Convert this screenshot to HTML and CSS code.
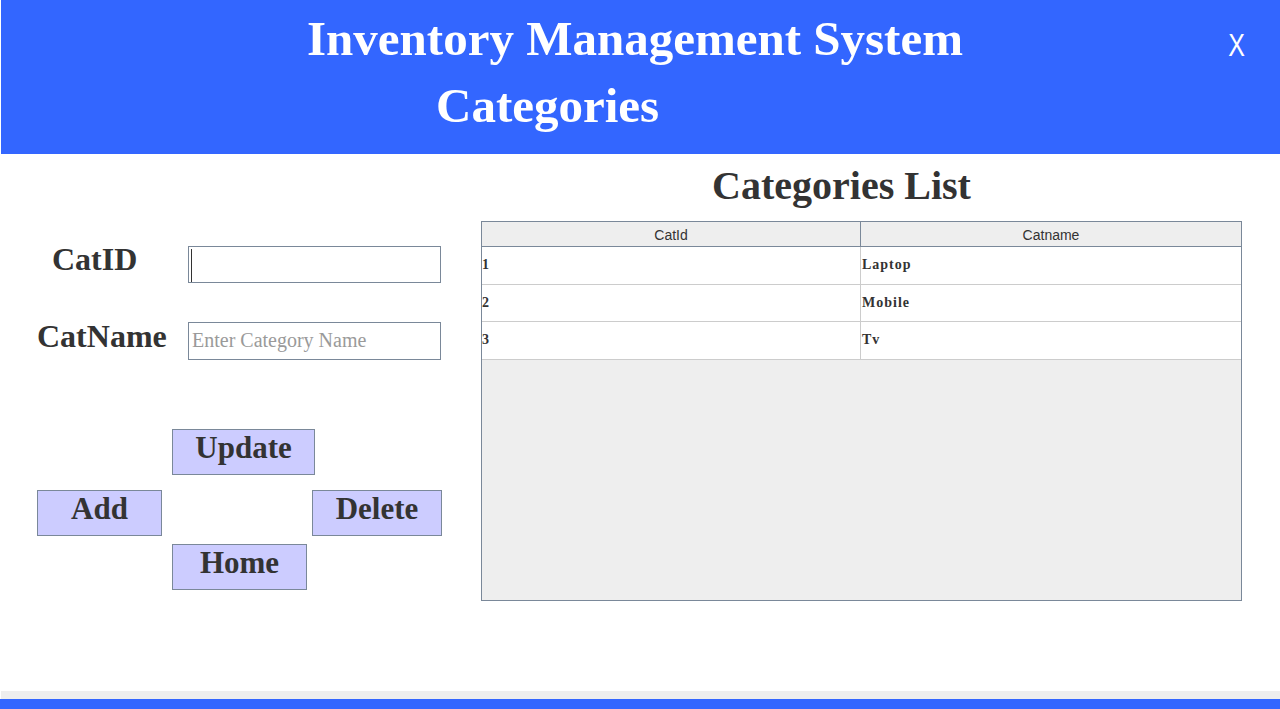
FILE: index.html
```html
<!DOCTYPE html>
<html lang="en">
<head>
<meta charset="utf-8">
<title>Inventory Management System - Categories</title>
<link rel="stylesheet" href="styles.css">
</head>
<body>
<div class="app">
  <header class="topbar">
    <div class="titles">
      <h1 class="title-main">Inventory Management System</h1>
      <h2 class="title-sub">Categories</h2>
    </div>
    <div class="close">X</div>
  </header>
  <main class="content">
    <section class="form-panel">
      <div class="field-row">
        <label class="field-label label-id">CatID</label>
        <div class="field field-id"><span class="caret"></span></div>
      </div>
      <div class="field-row row-name">
        <label class="field-label">CatName</label>
        <div class="field field-name"><span class="placeholder">Enter Category Name</span></div>
      </div>
      <div class="actions">
        <button class="btn btn-update">Update</button>
        <button class="btn btn-add">Add</button>
        <button class="btn btn-delete">Delete</button>
        <button class="btn btn-home">Home</button>
      </div>
    </section>
    <section class="list-panel">
      <h2 class="list-title">Categories List</h2>
      <div class="grid-table">
        <div class="thead">
          <div class="th th-first">CatId</div>
          <div class="th">Catname</div>
        </div>
        <div class="tr">
          <div class="td td-first">1</div>
          <div class="td">Laptop</div>
        </div>
        <div class="tr">
          <div class="td td-first">2</div>
          <div class="td">Mobile</div>
        </div>
        <div class="tr">
          <div class="td td-first">3</div>
          <div class="td">Tv</div>
        </div>
      </div>
    </section>
  </main>
  <footer class="footer">
    <div class="footer-gray"></div>
    <div class="footer-blue"></div>
  </footer>
</div>
</body>
</html>
```
FILE: styles.css
```css
* { box-sizing: border-box; }
html, body { margin: 0; padding: 0; background: #ffffff; }
body {
  width: 1280px;
  height: 709px;
  overflow: hidden;
  font-family: "Liberation Serif", "Times New Roman", serif;
  color: #333333;
}
.app { display: flex; flex-direction: column; width: 1280px; height: 709px; }

/* Header */
.topbar {
  height: 154px;
  margin-left: 1px;
  background: #3366ff;
  display: flex;
  align-items: flex-start;
  color: #ffffff;
}
.titles { flex: 1; display: flex; flex-direction: column; }
.title-main, .title-sub {
  margin: 0;
  font-size: 49px;
  font-weight: bold;
  line-height: 67px;
  white-space: nowrap;
}
.title-main { padding-top: 5px; padding-left: 306px; }
.title-sub { padding-left: 435px; }
.close {
  font-family: "Liberation Sans", Arial, sans-serif;
  font-size: 32px;
  line-height: 32px;
  padding-top: 29px;
  margin-right: 33px;
  transform: scaleX(0.78);
}

/* Main */
.content { height: 537px; display: flex; }
.form-panel { width: 481px; padding-top: 92px; display: flex; flex-direction: column; }
.field-row { display: flex; align-items: flex-start; padding-left: 37px; height: 37px; }
.row-name { margin-top: 39px; height: 38px; }
.field-label {
  width: 151px;
  font-size: 32px;
  font-weight: bold;
  line-height: 27px;
  color: #333333;
  white-space: nowrap;
}
.row-name .field-label { line-height: 29px; }
.label-id { padding-left: 15px; }
.field {
  width: 253px;
  height: 100%;
  border: 1px solid #7a8899;
  background: #ffffff;
  display: flex;
  align-items: flex-start;
}
.caret {
  display: block;
  width: 1px;
  height: 33px;
  margin-top: 2px;
  margin-left: 2px;
  background: #333333;
}
.placeholder {
  font-size: 20px;
  line-height: 30px;
  color: #9a9a9a;
  padding-left: 3px;
  padding-top: 2px;
  white-space: nowrap;
}

/* Buttons */
.actions {
  margin-top: 69px;
  padding-left: 37px;
  display: grid;
  grid-template-columns: 135px 140px auto;
  grid-template-rows: 61px 54px 46px;
  align-items: start;
  justify-items: start;
}
.btn {
  height: 46px;
  padding: 0 0 8px 0;
  margin: 0;
  border: 1px solid #7a8899;
  background: #ccccff;
  color: #333333;
  font-family: "Liberation Serif", "Times New Roman", serif;
  font-size: 31px;
  font-weight: bold;
  display: flex;
  align-items: center;
  justify-content: center;
  white-space: nowrap;
}
.btn-update { grid-column: 2; grid-row: 1; width: 143px; }
.btn-add { grid-column: 1; grid-row: 2; width: 125px; }
.btn-delete { grid-column: 3; grid-row: 2; width: 130px; }
.btn-home { grid-column: 2; grid-row: 3; width: 135px; }

/* List */
.list-panel { width: 761px; display: flex; flex-direction: column; }
.list-title {
  margin: 0;
  padding-top: 8px;
  padding-right: 40px;
  font-size: 40px;
  font-weight: bold;
  line-height: 48px;
  text-align: center;
  color: #333333;
  white-space: nowrap;
}
.grid-table {
  margin-top: 11px;
  height: 380px;
  border: 1px solid #7a8899;
  background: #eeeeee;
  display: flex;
  flex-direction: column;
}
.thead {
  display: flex;
  height: 25px;
  border-bottom: 1px solid #7a8899;
  background: #eeeeee;
}
.th {
  flex: 1;
  height: 24px;
  padding-top: 3px;
  font-family: "Liberation Sans", Arial, sans-serif;
  font-size: 14px;
  line-height: 21px;
  text-align: center;
  color: #333333;
}
.th-first { flex: 0 0 379px; border-right: 1px solid #7a8899; }
.tr {
  display: flex;
  height: 37.5px;
  background: #ffffff;
  border-bottom: 1px solid #cccccc;
}
.td {
  flex: 1;
  padding-left: 1px;
  font-size: 14px;
  font-weight: bold;
  line-height: 35px;
  letter-spacing: 1px;
  color: #333333;
}
.td-first { flex: 0 0 379px; border-right: 1px solid #cccccc; padding-left: 0; }

/* Footer */
.footer { display: flex; flex-direction: column; }
.footer-gray { height: 8px; margin-left: 1px; background: #eeeeee; }
.footer-blue { height: 10px; background: #3366ff; }
```
